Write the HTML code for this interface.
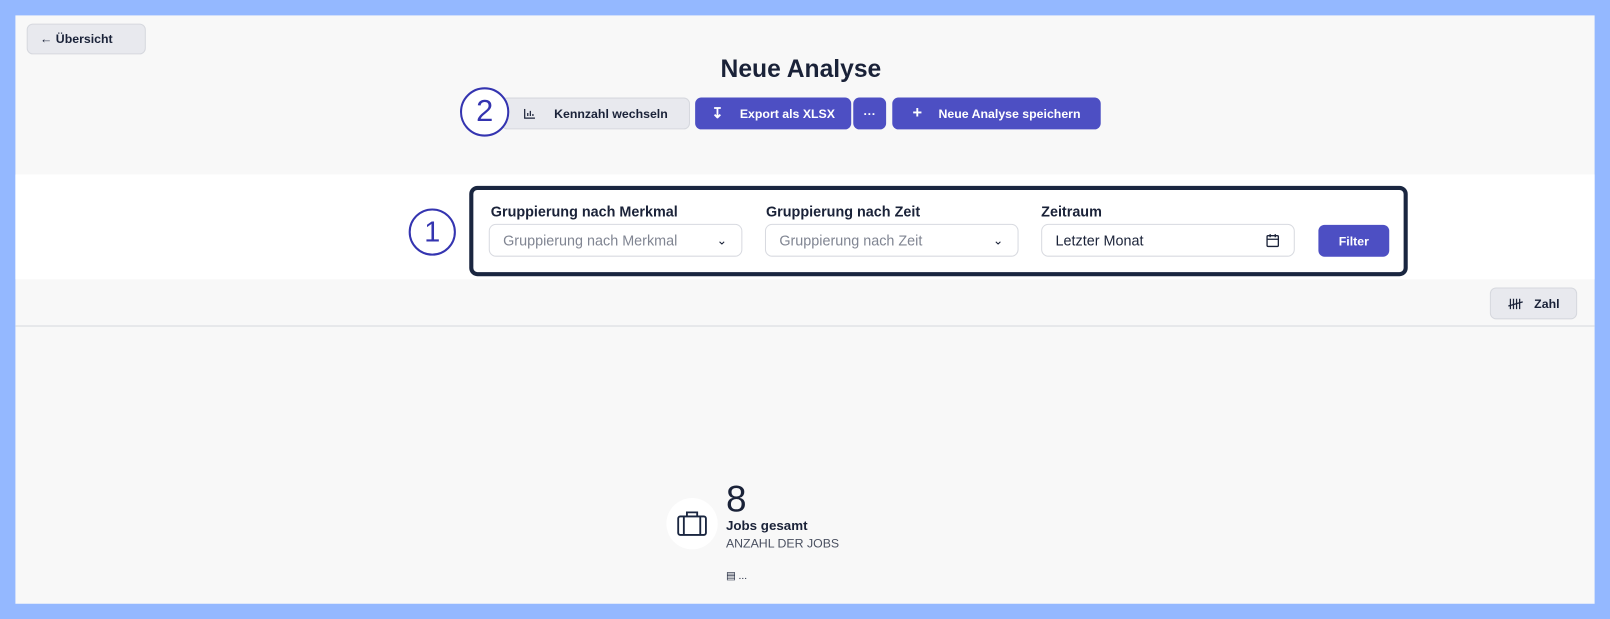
<!DOCTYPE html>
<html><head><meta charset="utf-8"><style>
*{box-sizing:border-box;margin:0;padding:0}
body{width:1610px;height:619px;background:#94b8ff;font-family:"Liberation Sans",sans-serif;color:#1a2238;position:relative;overflow:hidden}
.wrap{position:absolute;left:0;top:0;width:1568px;height:603px;transform:scale(1.02679);transform-origin:0 0}
.page{position:absolute;left:15px;top:15px;width:1538px;height:573px;background:#f8f8f8}
.abs{position:absolute}
.btn{position:absolute;height:31px;border-radius:6px;font-size:12px;font-weight:bold;display:flex;align-items:center;justify-content:center}
.grey{background:#e8e9ee;border:1px solid #d6d8de;color:#1a2238}
.pur{background:#4d4fc3;color:#fff}
.lbl{position:absolute;font-size:14px;font-weight:bold;color:#1a2238}
.sel{position:absolute;height:32px;width:247px;border:1px solid #d8dae0;border-radius:7px;background:#fff;font-size:14px;color:#808592;display:flex;align-items:center;padding-left:13px}
.circ{position:absolute;border:2px solid #3434b0;border-radius:50%;color:#3434b0;font-size:30px;display:flex;align-items:center;justify-content:center}
</style></head><body>
<div class="wrap">
<div class="page">
 <div class="btn grey" style="left:11px;top:8px;width:116px;height:30px;justify-content:flex-start;padding-left:12px">&#8592;&nbsp;Übersicht</div>
 <div class="abs" style="left:0;width:1530px;top:39px;text-align:center;font-size:24px;font-weight:bold">Neue Analyse</div>
 <div class="btn grey" style="left:473px;top:80px;width:184px">
  <svg width="12" height="10" style="margin-right:18px" viewBox="0 0 12 10" fill="none" stroke="#1a2238" stroke-width="1.2"><path d="M1 0v9h10M4 7V4M6.5 7V2M9 7V5"/></svg>Kennzahl wechseln</div>
 <div class="circ" style="left:433px;top:70px;width:48px;height:48px;background:#fff">2</div>
 <div class="btn pur" style="left:662px;top:80px;width:152px"><span style="font-size:14px;margin-right:16px">&#8615;</span>Export als XLSX</div>
 <div class="btn pur" style="left:816px;top:80px;width:32px">···</div>
 <div class="btn pur" style="left:854px;top:80px;width:203px"><span style="font-size:16px;margin-right:16px">+</span>Neue Analyse speichern</div>
 <div class="abs" style="left:0;top:155px;width:1538px;height:102px;background:#fff"></div>
 <div class="circ" style="left:383px;top:188px;width:46px;height:46px;font-size:28px">1</div>
 <div class="abs" style="left:442px;top:166px;width:914px;height:88px;border:4px solid #1a2640;border-radius:8px;background:#fff"></div>
 <div class="lbl" style="left:463px;top:183px">Gruppierung nach Merkmal</div>
 <div class="lbl" style="left:731px;top:183px">Gruppierung nach Zeit</div>
 <div class="lbl" style="left:999px;top:183px">Zeitraum</div>
 <div class="sel" style="left:461px;top:203px">Gruppierung nach Merkmal<span style="position:absolute;right:14px;color:#1a2238;font-size:12px">&#8964;</span></div>
 <div class="sel" style="left:730px;top:203px">Gruppierung nach Zeit<span style="position:absolute;right:14px;color:#1a2238;font-size:12px">&#8964;</span></div>
 <div class="sel" style="left:999px;top:203px;color:#1a2238">Letzter Monat
  <svg style="position:absolute;right:14px" width="13" height="14" viewBox="0 0 13 14" fill="none" stroke="#1a2238" stroke-width="1.3"><rect x="1" y="2.5" width="11" height="10.5" rx="1"/><path d="M1 6h11M4 1v3M9 1v3"/></svg></div>
 <div class="btn pur" style="left:1269px;top:204px;width:69px">Filter</div>
 <div class="abs" style="left:0;top:302px;width:1538px;height:1px;background:#d6d8de"></div>
 <div class="btn grey" style="left:1436px;top:265px;width:85px"><svg width="16" height="12" style="margin-right:10px" viewBox="0 0 16 12" fill="none" stroke="#1a2238" stroke-width="1.2"><path d="M3 1v10M6 1v10M9 1v10M12 1v10M1 8l14-4"/></svg>Zahl</div>
 <div class="abs" style="left:634px;top:470px;width:50px;height:50px;border-radius:50%;background:#fff"></div>
 <svg class="abs" style="left:644px;top:482px" width="30" height="26" viewBox="0 0 30 26" fill="none" stroke="#1a2640" stroke-width="1.8"><rect x="1.5" y="6" width="27" height="18" rx="2"/><path d="M10 6V2h10v4M7 6v18M23 6v18"/></svg>
 <div class="abs" style="left:692px;top:450px;font-size:36px;color:#1a2238">8</div>
 <div class="abs" style="left:692px;top:489px;font-size:13px;font-weight:bold">Jobs gesamt</div>
 <div class="abs" style="left:692px;top:507px;font-size:12px;color:#4a5060">ANZAHL DER JOBS</div>
 <div class="abs" style="left:692px;top:541px;font-size:10px;color:#1a2238">&#9636; ...</div>
</div>
</div>
</body></html>
